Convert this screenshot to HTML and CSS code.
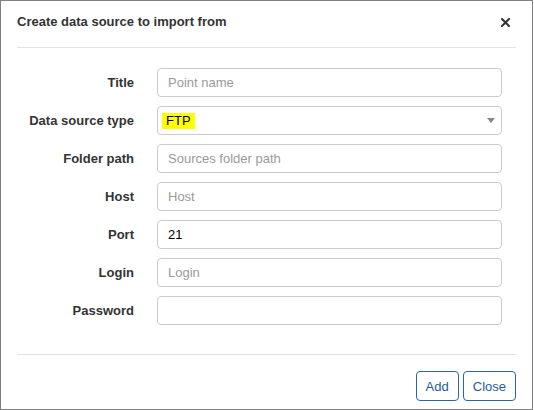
FILE: index.html
```html
<!DOCTYPE html>
<html>
<head>
<meta charset="utf-8">
<link rel="stylesheet" href="styles.css">
</head>
<body>
<div class="modal">
  <div class="modal-header">
    <h4 class="modal-title">Create data source to import from</h4>
    <button class="close" type="button" aria-label="Close">
      <svg width="9" height="9" viewBox="0 0 9 9"><path d="M1 1L8 8M8 1L1 8" stroke="#333" stroke-width="2" stroke-linecap="square" fill="none"/></svg>
    </button>
  </div>
  <form class="modal-body">
    <label class="label">Title</label>
    <input class="field" type="text" placeholder="Point name">
    <label class="label">Data source type</label>
    <div class="field select"><span class="hl">FTP</span><span class="caret"></span></div>
    <label class="label">Folder path</label>
    <input class="field" type="text" placeholder="Sources folder path">
    <label class="label">Host</label>
    <input class="field" type="text" placeholder="Host">
    <label class="label">Port</label>
    <input class="field" type="text" value="21">
    <label class="label">Login</label>
    <input class="field" type="text" placeholder="Login">
    <label class="label">Password</label>
    <input class="field" type="password">
  </form>
  <div class="modal-footer">
    <button class="btn" type="button">Add</button>
    <button class="btn" type="button">Close</button>
  </div>
</div>
</body>
</html>
```
FILE: styles.css
```css
* { box-sizing: border-box; }
html, body { margin: 0; padding: 0; background: #fff; }
body { font-family: "Liberation Sans", Arial, sans-serif; font-size: 13px; color: #333; }

.modal {
  width: 533px;
  height: 410px;
  border: 1px solid #808080;
  background: #fff;
  display: flex;
  flex-direction: column;
}

.modal-header {
  margin: 0 16px;
  padding: 12px 0 17px;
  border-bottom: 1px solid #e3e3e3;
  display: flex;
  justify-content: space-between;
  align-items: flex-start;
}
.modal-title {
  margin: 0;
  font-size: 13px;
  font-weight: bold;
  line-height: 17px;
  color: #333;
}
.close {
  border: 0;
  background: none;
  padding: 0;
  margin: 5px 6px 0 0;
  width: 9px;
  height: 9px;
  display: block;
  cursor: pointer;
}
.close svg { display: block; }

.modal-body {
  margin: 0 16px;
  padding: 20px 0 29px;
  display: grid;
  grid-template-columns: 117px 345px;
  column-gap: 23px;
  row-gap: 9px;
  align-items: center;
}
.label {
  text-align: right;
  font-weight: bold;
  color: #333;
  line-height: 16px;
}
.field {
  height: 29px;
  width: 345px;
  border: 1px solid #ccc;
  border-radius: 4px;
  padding: 0 10px;
  font-family: "Liberation Sans", Arial, sans-serif;
  font-size: 13px;
  color: #000;
  background: #fff;
  outline: none;
}
.field::placeholder { color: #9a9a9a; }
.select {
  display: flex;
  align-items: center;
  padding: 0 6px 0 4px;
}
.hl {
  background: #ffff00;
  color: #000;
  line-height: 16px;
  padding: 0 4px;
}
.caret {
  margin-left: auto;
  width: 0;
  height: 0;
  border-left: 4px solid transparent;
  border-right: 4px solid transparent;
  border-top: 5px solid #888;
}

.modal-footer {
  margin: 0 16px;
  padding-top: 16px;
  border-top: 1px solid #e3e3e3;
  display: flex;
  justify-content: flex-end;
  gap: 4px;
}
.btn {
  height: 30px;
  padding: 0 9px;
  border: 1px solid #2a66a6;
  border-radius: 4px;
  background: #fff;
  color: #1f5c9c;
  font-family: "Liberation Sans", Arial, sans-serif;
  font-size: 13px;
  cursor: pointer;
}
```
